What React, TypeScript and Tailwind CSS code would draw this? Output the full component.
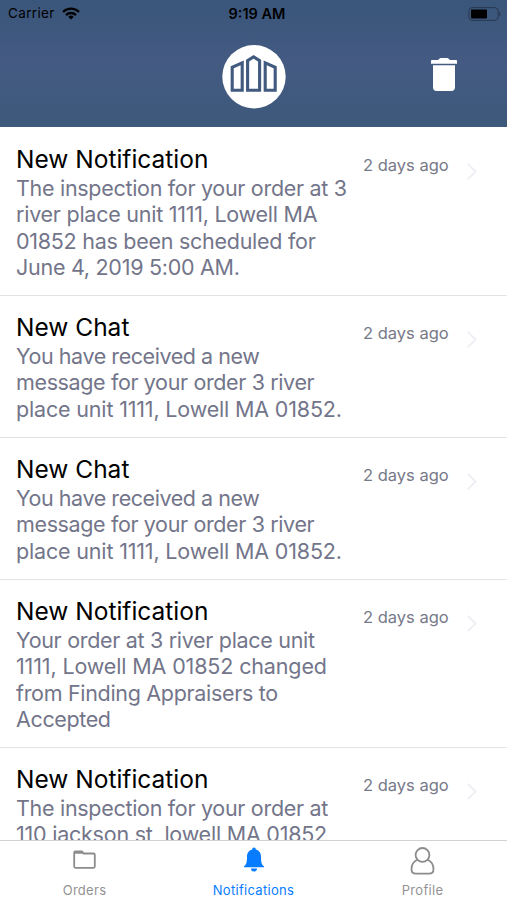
import React from "react";

interface Line {
  text: string;
  tracking: string;
}

interface Notification {
  title: string;
  lines: Line[];
  time: string;
}

const chatLines: Line[] = [
  { text: "You have received a new", tracking: "tracking-[-0.44px]" },
  { text: "message for your order 3 river", tracking: "tracking-[-0.37px]" },
  { text: "place unit 1111, Lowell MA 01852.", tracking: "tracking-[-0.17px]" },
];

const notifications: Notification[] = [
  {
    title: "New Notification",
    lines: [
      { text: "The inspection for your order at 3", tracking: "tracking-[-0.3px]" },
      { text: "river place unit 1111, Lowell MA", tracking: "tracking-[-0.25px]" },
      { text: "01852 has been scheduled for", tracking: "tracking-[-0.27px]" },
      { text: "June 4, 2019 5:00 AM.", tracking: "tracking-[-0.27px]" },
    ],
    time: "2 days ago",
  },
  {
    title: "New Chat",
    lines: chatLines,
    time: "2 days ago",
  },
  {
    title: "New Chat",
    lines: chatLines,
    time: "2 days ago",
  },
  {
    title: "New Notification",
    lines: [
      { text: "Your order at 3 river place unit", tracking: "tracking-[-0.31px]" },
      { text: "1111, Lowell MA 01852 changed", tracking: "tracking-[-0.14px]" },
      { text: "from Finding Appraisers to", tracking: "tracking-[-0.31px]" },
      { text: "Accepted", tracking: "tracking-[-0.37px]" },
    ],
    time: "2 days ago",
  },
  {
    title: "New Notification",
    lines: [
      { text: "The inspection for your order at", tracking: "tracking-[-0.3px]" },
      { text: "110 jackson st, lowell MA 01852", tracking: "tracking-[-0.23px]" },
    ],
    time: "2 days ago",
  },
];

const StatusBar = () => (
  <div className="grid h-[27px] grid-cols-3 items-center pl-2 pr-[5px] text-[13.5px] leading-none text-black">
    <div className="flex items-center gap-[7px]">
      <span className="tracking-[0.35px]">Carrier</span>
      <svg width="18" height="13" viewBox="0 0 18 13" fill="none" stroke="#000" strokeWidth="2.3">
        <path d="M1 5a11.3 11.3 0 0 1 16 0" />
        <path d="M4 8.1a7 7 0 0 1 10 0" />
        <path d="M9 12.6 6.3 9.9a3.8 3.8 0 0 1 5.4 0z" fill="#000" stroke="none" />
      </svg>
    </div>
    <span className="whitespace-nowrap pl-1 pt-px text-center text-[14.5px] font-semibold">9:19 AM</span>
    <svg className="justify-self-end" width="34" height="14" viewBox="0 0 34 14">
      <rect x="0.9" y="0.6" width="29.2" height="12.8" rx="3.4" fill="none" stroke="#28384f" strokeWidth="1" />
      <rect x="3" y="2.6" width="16" height="8.8" rx="0.8" fill="#000" />
      <path d="M31.2 4.8c1.8.8 1.8 3.6 0 4.4z" fill="#28384f" />
    </svg>
  </div>
);

const Header = () => (
  <header className="h-[127px] shrink-0 bg-linear-to-b from-[#3a567a] via-[#445a82] via-50% to-[#3d597b]">
    <StatusBar />
    <div className="grid h-[100px] grid-cols-3 pt-[18px]">
      <span />
      <svg className="justify-self-center" width="64" height="64" viewBox="0 0 64 64">
        <circle cx="32" cy="31.7" r="31.7" fill="#fff" />
        <g fill="none" stroke="#415a7f" strokeWidth="3.1">
          <path d="M10.2 45.2V22.3l10-4.4v27.3z" />
          <path d="M25.6 45.2V15.600l6-3.800 6 3.800v29.600z" />
          <path d="M43.2 45.200V17.900l10 4.400v22.900z" />
        </g>
      </svg>
      <svg className="ml-[93px] mt-[13px]" width="26" height="33" viewBox="0 0 26 33" fill="#fff">
        <path d="M0 2.800Q0 2 .8 2H7l1.700-1.600Q9 0 9.600 0h6.800q.6 0 .9.400L19 2h6.200q.8 0 .8.800v3H0z" />
        <path d="M2 7.300h22v22q0 3.700-3.600 3.700H5.600Q2 33 2 29.300z" />
      </svg>
    </div>
  </header>
);

const NotificationRow = ({ title, lines, time }: Notification) => (
  <article className="flex shrink-0 border-b border-[#e2e2e4] pb-[15px] pl-4 pt-4">
    <div className="w-[347px] shrink-0">
      <h3 className="mb-px text-[24.5px] leading-[30px] text-black">{title}</h3>
      <p className="whitespace-nowrap text-[21.5px] leading-[26.3px] text-[#73758a]">
        {lines.map((line) => (
          <span key={line.text} className={`block ${line.tracking}`}>
            {line.text}
          </span>
        ))}
      </p>
    </div>
    <time className="mt-[11px] h-5 w-[86px] whitespace-nowrap text-[16.5px] leading-5 text-[#777988]">
      {time}
    </time>
    <svg className="ml-[18px] mt-[19px]" width="10" height="17" viewBox="0 0 10 17" fill="none" stroke="#ebebf3" strokeWidth="1.6">
      <path d="m.8.8 7.700 7.700-7.700 7.700" />
    </svg>
  </article>
);

const TabBar = () => (
  <nav className="grid h-[60px] shrink-0 grid-cols-3 border-t border-[#d2d2d2] bg-white text-[13px] tracking-[0.3px] text-[#939393]">
    <div className="flex flex-col items-center">
      <svg className="mt-[9px]" width="23" height="20" viewBox="0 0 23 20">
        <path d="M1.2 2.600v14q0 1.200 1.200 1.200h18.200q1.200 0 1.200-1.200V4.700q0-1.200-1.200-1.200H10.600L9 1.500H2.400Q1.200 1.500 1.200 2.600z" fill="none" stroke="#8c8c8c" strokeWidth="1.8" />
        <path d="M1 1.500h8l2 2.300H1z" fill="#8c8c8c" />
      </svg>
      <span className="mt-3 leading-4">Orders</span>
    </div>
    <div className="flex flex-col items-center text-[#087cff]">
      <svg className="mt-[6px]" width="22" height="26" viewBox="0 0 22 26" fill="currentColor">
        <path d="M11 .5c1.200 0 1.800.8 1.800 1.900 3.800 1 5.200 4 5.200 7.300 0 6 .7 7.800 3 9.600v.9H1v-.9c2.300-1.800 3-3.600 3-9.600 0-3.300 1.400-6.300 5.200-7.300C9.200 1.300 9.800.5 11 .5z" />
        <path d="M8 21.600h6a3 2.900 0 0 1-6 0z" />
      </svg>
      <span className="mt-[9px] leading-4">Notifications</span>
    </div>
    <div className="flex flex-col items-center">
      <svg className="mt-[6px]" width="25" height="28" viewBox="0 0 25 28" fill="none" stroke="#8c8c8c" strokeWidth="1.8">
        <circle cx="12.500" cy="7.900" r="6.900" />
        <path d="M7.300 12.800C3.300 14.600 1.500 18 1.500 22.300q0 4.400 4.400 4.400h13.200q4.400 0 4.400-4.400c0-4.300-1.800-7.700-5.800-9.500" />
      </svg>
      <span className="mt-[7px] leading-4">Profile</span>
    </div>
  </nav>
);

const App = () => {
  return (
    <div className="flex h-[900px] w-[507px] flex-col overflow-hidden bg-white font-['Inter','Liberation_Sans',sans-serif]">
      <Header />
      <main className="flex min-h-0 flex-1 flex-col overflow-hidden pt-px">
        {notifications.map((item, index) => (
          <NotificationRow key={index} {...item} />
        ))}
      </main>
      <TabBar />
    </div>
  );
};

export default App;
